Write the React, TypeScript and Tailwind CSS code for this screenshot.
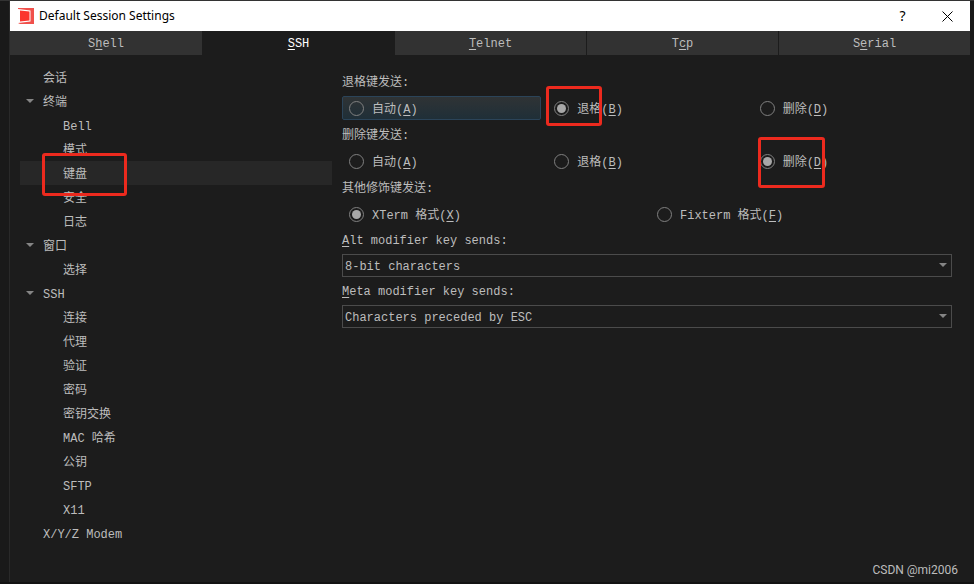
import React, { useState } from 'react';
import clsx from 'clsx';

interface TreeItem {
  label: string;
  level: number;
  open?: boolean;
}

interface RadioOption {
  value: string;
  label: string;
  hotkey: string;
  mark?: string;
}

const TABS = [
  { label: 'Shell', hotkey: 'h' },
  { label: 'SSH', hotkey: 'S' },
  { label: 'Telnet', hotkey: 'T' },
  { label: 'Tcp', hotkey: 'c' },
  { label: 'Serial', hotkey: 'e' },
];

const TREE: TreeItem[] = [
  { label: '会话', level: 0 },
  { label: '终端', level: 0, open: true },
  { label: 'Bell', level: 1 },
  { label: '模式', level: 1 },
  { label: '键盘', level: 1 },
  { label: '安全', level: 1 },
  { label: '日志', level: 1 },
  { label: '窗口', level: 0, open: true },
  { label: '选择', level: 1 },
  { label: 'SSH', level: 0, open: true },
  { label: '连接', level: 1 },
  { label: '代理', level: 1 },
  { label: '验证', level: 1 },
  { label: '密码', level: 1 },
  { label: '密钥交换', level: 1 },
  { label: 'MAC 哈希', level: 1 },
  { label: '公钥', level: 1 },
  { label: 'SFTP', level: 1 },
  { label: 'X11', level: 1 },
  { label: 'X/Y/Z Modem', level: 0 },
];

// Underlines the hotkey: the letter in "(X)" if there is one, else its first occurrence
const Mnemonic: React.FC<{ text: string; hotkey: string }> = ({ text, hotkey }) => {
  const i = text.endsWith(`(${hotkey})`) ? text.length - 2 : text.indexOf(hotkey);
  return (
    <span className="whitespace-pre">
      {text.slice(0, i)}
      <span className="underline underline-offset-2">{hotkey}</span>
      {text.slice(i + 1)}
    </span>
  );
};

// Red highlight frame drawn over a control
const Mark: React.FC<{ className: string }> = ({ className }) => (
  <span className={clsx('pointer-events-none absolute z-10 rounded-[3px] border-3 border-[#ec2a1e]', className)} />
);

const Triangle: React.FC<{ className?: string }> = ({ className }) => (
  <svg viewBox="0 0 8 4" className={clsx('h-1 w-2 fill-[#858585]', className)} aria-hidden="true">
    <path d="M0 0h8L4 4z" />
  </svg>
);

interface RadioGroupProps {
  name: string;
  legend: string;
  options: RadioOption[];
  initial: string;
  focused?: string;
}

const RadioGroup: React.FC<RadioGroupProps> = ({ name, legend, options, initial, focused }) => {
  const [value, setValue] = useState(initial);

  return (
    <div role="radiogroup" aria-label={legend} className="flex flex-col gap-1.5">
      <div className="h-[17px] leading-5">{legend}</div>
      <div className={clsx('grid gap-1.5', options.length === 3 ? 'grid-cols-3' : 'grid-cols-2')}>
        {options.map((o) => (
          <label
            key={o.value}
            className={clsx(
              'relative flex h-6 items-center gap-2 rounded-xs border px-1.5',
              focused === o.value
                ? 'border-[#2b4459] bg-linear-to-b from-[#2f3335] to-[#1f2f38]'
                : 'border-transparent',
            )}
          >
            <input
              type="radio"
              name={name}
              checked={value === o.value}
              onChange={() => setValue(o.value)}
              className="flex size-[15px] appearance-none items-center justify-center rounded-full border border-[#808080] before:size-[9px] before:rounded-full checked:before:bg-[#a8a8a8]"
            />
            <span className="pt-[3px]">
              <Mnemonic text={o.label} hotkey={o.hotkey} />
            </span>
            {o.mark && <Mark className={o.mark} />}
          </label>
        ))}
      </div>
    </div>
  );
};

interface SelectFieldProps {
  id: string;
  label: string;
  hotkey: string;
  options: string[];
}

const SelectField: React.FC<SelectFieldProps> = ({ id, label, hotkey, options }) => (
  <div className="flex flex-col gap-[5px]">
    <label htmlFor={id} className="h-[17px] leading-[18px]">
      <Mnemonic text={label} hotkey={hotkey} />
    </label>
    <div className="relative">
      <select
        id={id}
        className="block h-[23px] w-full appearance-none border border-[#4b4b4b] bg-[#1c1c1c] px-0.5 pt-0.5 outline-none"
      >
        {options.map((o) => (
          <option key={o}>{o}</option>
        ))}
      </select>
      <Triangle className="pointer-events-none absolute top-[9px] right-[5px]" />
    </div>
  </div>
);

const TitleBar = () => (
  <header className="flex h-[30px] items-center bg-white pl-2 font-['Noto_Sans',sans-serif] text-xs text-black">
    <svg viewBox="0 0 16 16" className="size-4" aria-hidden="true">
      <path d="M0 0h16v16H2L0 15l12.500-1.500V2.500L0 1z" fill="#f0504b" />
      <path d="M2 2.500l9.500 1v9L2 13.500z" fill="#fb352f" />
    </svg>
    <h1 className="ml-[5px] flex-1">Default Session Settings</h1>
    <button type="button" aria-label="Help" className="w-[45px] text-center text-sm">
      ?
    </button>
    <button type="button" aria-label="Close" className="flex w-[45px] justify-center">
      <svg viewBox="0 0 11 11" className="size-[11px]" fill="none" stroke="#000" aria-hidden="true">
        <path d="M.5.500l10 10M10.500.500l-10 10" />
      </svg>
    </button>
  </header>
);

const App = () => {
  const [tab, setTab] = useState('SSH');
  const [page, setPage] = useState('键盘');

  return (
    <div className="flex min-h-screen flex-col border-t border-b-2 border-t-[#333] border-b-[#121212] bg-[#191919] pr-1 pl-[9px] font-['Liberation_Mono','Noto_Sans_CJK_SC',monospace] text-xs text-[#bdbdbd]">
      <div className="flex flex-1 flex-col border-l border-[#292929] bg-[#1c1c1c]">
        <TitleBar />

        <nav className="grid h-6 grid-cols-5" role="tablist">
          {TABS.map((t) => (
            <button
              key={t.label}
              type="button"
              role="tab"
              aria-selected={tab === t.label}
              onClick={() => setTab(t.label)}
              className={clsx(
                'border-l border-[#1c1c1c] pt-0.5 first:border-l-0',
                tab === t.label ? 'bg-[#1c1c1c] text-white' : 'bg-[#323232]',
              )}
            >
              <Mnemonic text={t.label} hotkey={t.hotkey} />
            </button>
          ))}
        </nav>

        <main className="flex gap-2.5 pt-2.5 pr-[18px] pl-2.5">
          <ul className="w-[312px] shrink-0">
            {TREE.map((item) => (
              <li key={`${item.label}-${item.level}`} className="relative">
                <button
                  type="button"
                  onClick={() => setPage(item.label)}
                  className={clsx(
                    'flex h-6 w-full items-center text-left',
                    item.level === 1 ? 'pl-[43px]' : 'gap-[9px] pl-1.5',
                    page === item.label && 'bg-[#272727]',
                  )}
                >
                  {item.level === 0 && <Triangle className={item.open ? '' : 'invisible'} />}
                  <span className="pt-[3px]">{item.label}</span>
                </button>
                {item.label === '键盘' && <Mark className="-top-2 left-[22px] h-[43px] w-[85px]" />}
              </li>
            ))}
          </ul>

          <form className="flex min-w-0 flex-1 flex-col gap-1.5 pt-2">
            <RadioGroup
              name="backspace"
              legend="退格键发送:"
              initial="backspace"
              focused="auto"
              options={[
                { value: 'auto', label: '自动(A)', hotkey: 'A' },
                { value: 'backspace', label: '退格(B)', hotkey: 'B', mark: '-top-[11px] -left-0.5 h-10 w-14' },
                { value: 'delete', label: '删除(D)', hotkey: 'D' },
              ]}
            />
            <RadioGroup
              name="delete"
              legend="删除键发送:"
              initial="delete"
              options={[
                { value: 'auto', label: '自动(A)', hotkey: 'A' },
                { value: 'backspace', label: '退格(B)', hotkey: 'B' },
                { value: 'delete', label: '删除(D)', hotkey: 'D', mark: '-top-[13px] left-1 h-[51px] w-[67px]' },
              ]}
            />
            <RadioGroup
              name="modifier"
              legend="其他修饰键发送:"
              initial="xterm"
              options={[
                { value: 'xterm', label: 'XTerm 格式(X)', hotkey: 'X' },
                { value: 'fixterm', label: 'Fixterm 格式(F)', hotkey: 'F' },
              ]}
            />
            <SelectField
              id="alt-modifier"
              label="Alt modifier key sends:"
              hotkey="A"
              options={['8-bit characters', 'Characters preceded by ESC']}
            />
            <SelectField
              id="meta-modifier"
              label="Meta modifier key sends:"
              hotkey="M"
              options={['Characters preceded by ESC', '8-bit characters']}
            />
          </form>
        </main>

        <footer className="mt-auto pr-3 pb-1 text-right font-['Roboto',sans-serif]">CSDN @mi2006</footer>
      </div>
    </div>
  );
};

export default App;
